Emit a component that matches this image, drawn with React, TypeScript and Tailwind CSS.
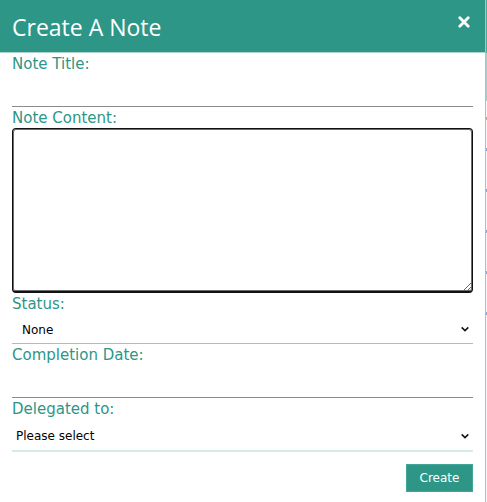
import type { ReactNode } from "react";

const labelClass = "block h-[21px] text-[15px] leading-[22px] text-[#2d9687]";

function Chevron() {
  return (
    <svg
      aria-hidden="true"
      className="pointer-events-none col-start-1 row-start-1 mr-1 self-center justify-self-end"
      width="8"
      height="6"
      viewBox="0 0 8 6"
      fill="none"
      stroke="#111"
      strokeWidth="1.5"
    >
      <path d="M0.7 1.4L4 4.6L7.3 1.4" />
    </svg>
  );
}

function SelectField({
  id,
  label,
  className,
  children,
}: {
  id: string;
  label: string;
  className: string;
  children: ReactNode;
}) {
  return (
    <div>
      <label htmlFor={id} className={labelClass}>{label}</label>
      <div className="grid">
        <select
          id={id}
          className={`col-start-1 row-start-1 w-full appearance-none bg-transparent pt-[2px] text-[12px] text-black outline-none ${className}`}
        >
          {children}
        </select>
        <Chevron />
      </div>
    </div>
  );
}

function TextField({ id, label }: { id: string; label: string }) {
  return (
    <div>
      <label htmlFor={id} className={labelClass}>{label}</label>
      <input
        id={id}
        type="text"
        className="block h-[33px] w-full border-b border-[#8c8c8c] bg-transparent px-1 text-[12px] outline-none"
      />
    </div>
  );
}

/* Sliver of the page behind the dialog */
function Backdrop() {
  return (
    <div aria-hidden="true" className="flex w-px flex-col">
      <div className="h-[53px] bg-[#55a498]" />
      <div className="h-12 bg-[#a5cfc8]" />
      <div className="flex flex-col gap-[38px] pt-4">
        <div className="h-[3px] bg-[#c4a594]" />
        <div className="-mt-[10px] h-[3px] bg-[#8ea6d0]" />
        <div className="h-[3px] bg-[#8ea6d0]" />
        <div className="h-[3px] bg-[#8ea6d0]" />
        <div className="h-[3px] bg-[#8ea6d0]" />
        <div className="h-[3px] bg-[#8ea6d0]" />
      </div>
    </div>
  );
}

export default function App() {
  return (
    <div className="flex min-h-screen bg-[#f5f6f7] font-['DejaVu_Sans',sans-serif]">
      <main className="flex-1 border-r border-[#b9bcbe] bg-white">
        <header className="flex h-[53px] items-start justify-between border-b border-[#a9d3cc] bg-[#2d9687] pr-4 pl-3 text-white">
          <h1 className="pt-3 font-['Open_Sans','Noto_Sans',sans-serif] text-[23px] leading-[30px]">Create A Note</h1>
          <button type="button" aria-label="Close" className="-mr-px pt-4">
            <svg width="12" height="12" viewBox="0 0 12 12" stroke="currentColor" strokeWidth="2.8" strokeLinecap="round">
              <path d="M1.8 1.8L10.2 10.2M10.2 1.8L1.8 10.2" />
            </svg>
          </button>
        </header>
        <form className="px-3" onSubmit={(e) => e.preventDefault()}>
          <TextField id="title" label="Note Title:" />
          <div>
            <label htmlFor="content" className={labelClass}>Note Content:</label>
            <textarea
              id="content"
              className="block h-[165px] w-full resize rounded border border-b-2 border-[#101010] bg-white p-1 text-[12px] shadow-[inset_0_0_0_1px_#6b6b6b] outline-none"
            />
          </div>
          <SelectField id="status" label="Status:" className="h-[30px] border-b border-[#b8b8b8] pl-[10px]">
            <option>None</option>
          </SelectField>
          <TextField id="date" label="Completion Date:" />
          <SelectField id="delegate" label="Delegated to:" className="h-[33px] border-b-2 border-[#d5ebe6] pl-1">
            <option>Please select</option>
          </SelectField>
          <div className="flex justify-end pt-3">
            <button type="submit" className="h-7 w-[67px] border border-[#43a597] bg-[#2d9687] text-[12px] text-white">
              Create
            </button>
          </div>
        </form>
      </main>
      <Backdrop />
    </div>
  );
}
